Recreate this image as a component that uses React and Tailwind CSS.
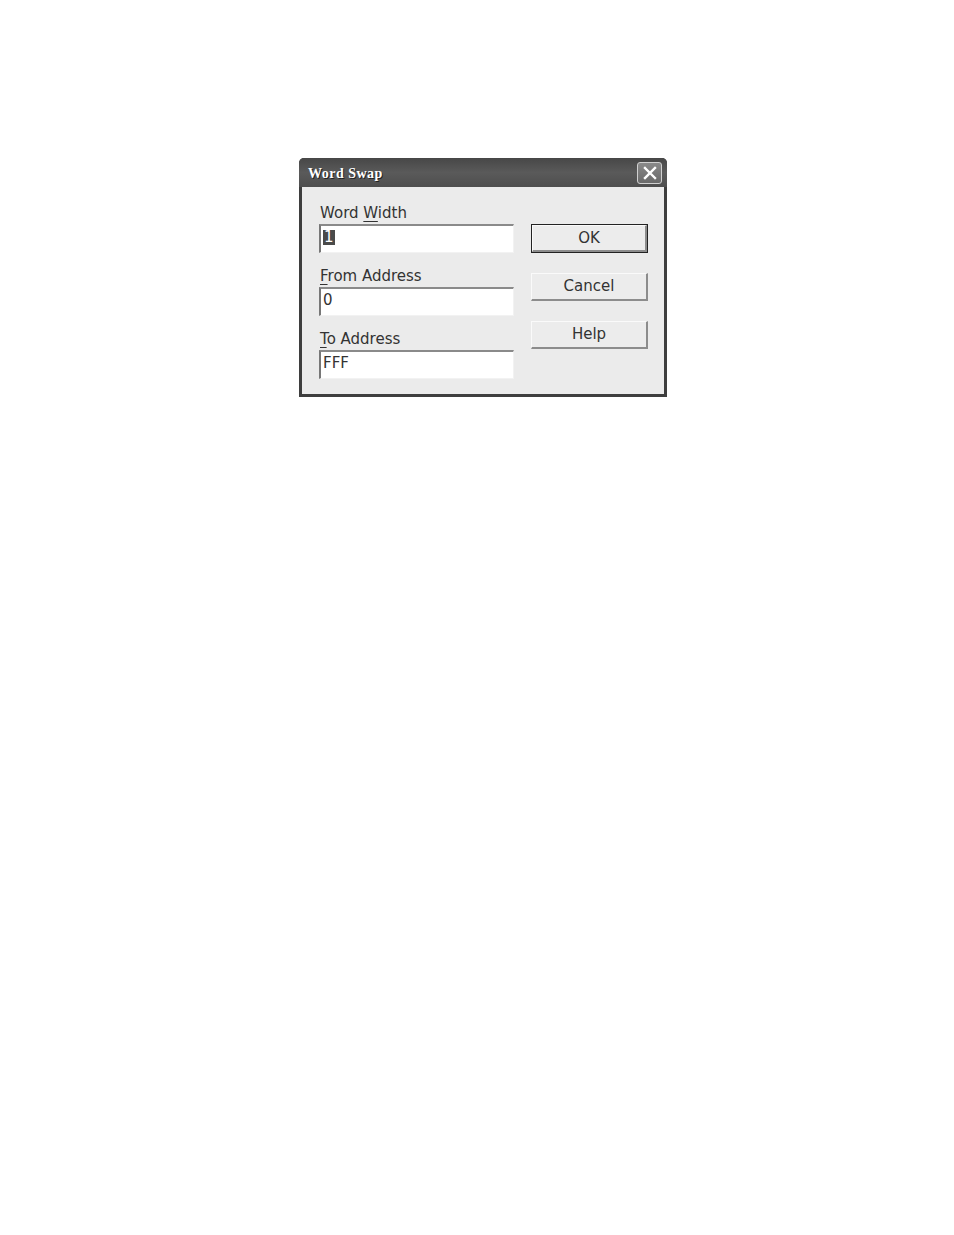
export default function App() {
  const font = { fontFamily: '"DejaVu Sans", Verdana, sans-serif' };
  const Label = ({ u, rest }) => (
    <div className="h-[18px] text-[15px] leading-[18px] text-[#333] pl-[1px]" style={font}>
      <span className="underline underline-offset-[3px] decoration-[1px]">{u}</span>
      {rest}
    </div>
  );
  const Input = ({ children }) => (
    <div className="mt-[2px] h-[29px] w-[195px] bg-white border-t-2 border-l-2 border-r border-b border-t-[#8a8a8a] border-l-[#777] border-r-[#f2f2f2] border-b-[#f2f2f2] pl-[2px] pt-[2px] text-[15px] leading-[18px] text-[#333]" style={font}>
      {children}
    </div>
  );
  const Btn = ({ children, def }) => (
    <div
      className={
        def
          ? "h-[29px] w-[117px] border border-[#222] bg-[#ececec]"
          : "h-[28px] w-[117px] bg-[#ececec]"
      }
    >
      <div className="h-full w-full border-t border-l border-t-[#fafafa] border-l-[#fafafa] border-b-2 border-r-2 border-b-[#8c8c8c] border-r-[#8c8c8c] flex items-center justify-center text-[15px] text-[#333]" style={font}>
        {children}
      </div>
    </div>
  );
  return (
    <div className="w-[954px] h-[1235px] bg-white relative">
      <div className="pt-[158px] pl-[299px]">
        <div className="w-[368px] h-[239px] flex flex-col bg-[#3e3e3e] rounded-t-[5px] overflow-hidden">
          <div className="h-[29px] shrink-0 flex items-center justify-between pl-[9px] pr-[5px] bg-gradient-to-b from-[#474747] via-[#5a5a5a] to-[#4e4e4e]">
            <span className="text-white font-bold text-[14px] tracking-[0.5px] pt-[1px]" style={{ fontFamily: '"Liberation Serif", "Times New Roman", serif', textShadow: "1px 1px 0 #222" }}>
              Word Swap
            </span>
            <div className="w-[25px] h-[22px] rounded-[3px] border border-[#d0d0d0] bg-gradient-to-b from-[#8a8a8a] to-[#6a6a6a] flex items-center justify-center mt-[1px]">
              <svg width="14" height="14" viewBox="0 0 14 14">
                <path d="M2 2 L12 12 M12 2 L2 12" stroke="white" strokeWidth="2.4" strokeLinecap="square" />
              </svg>
            </div>
          </div>
          <div className="flex-1 mx-[3px] mb-[3px] bg-[#ebebeb] flex pl-[17px] pr-[17px] pt-[17px]">
            <div className="w-[195px] flex flex-col">
              <Label u="" rest={<>Word <span className="underline underline-offset-[3px]">W</span>idth</>} />
              <Input>
                <span className="inline-block bg-[#4a4a4a] text-white px-[1px] leading-[15px] mt-[1px]">1</span>
              </Input>
              <div className="h-[14px]" />
              <Label u="F" rest="rom Address" />
              <Input>0</Input>
              <div className="h-[14px]" />
              <Label u="T" rest="o Address" />
              <Input>FFF</Input>
            </div>
            <div className="ml-[17px] pt-[20px] flex flex-col gap-[20px]">
              <Btn def>OK</Btn>
              <Btn>Cancel</Btn>
              <Btn>Help</Btn>
            </div>
          </div>
        </div>
      </div>
    </div>
  );
}
